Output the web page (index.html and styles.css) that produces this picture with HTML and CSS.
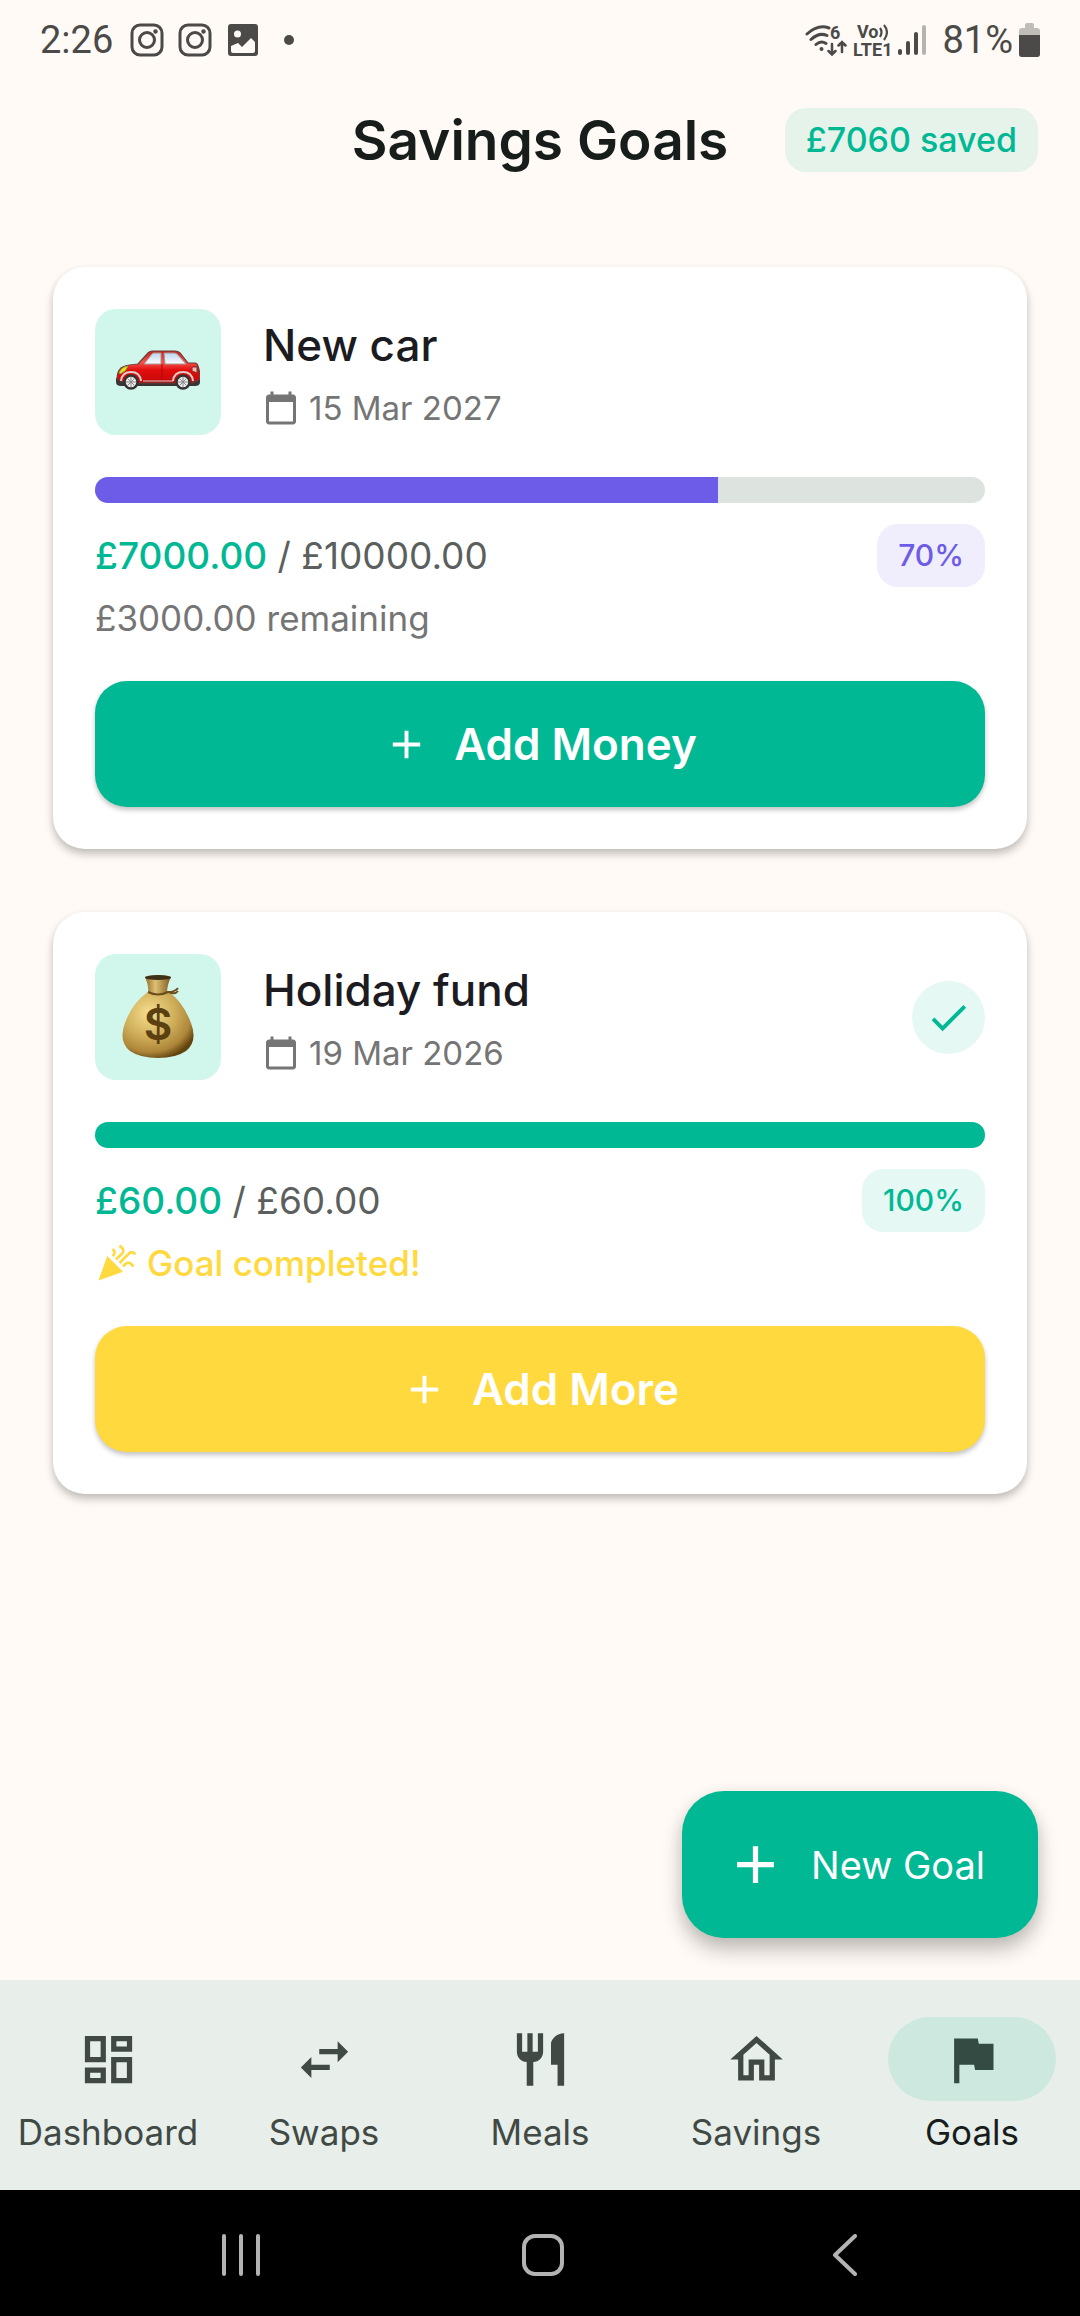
FILE: index.html
```html
<!DOCTYPE html>
<html lang="en">
<head>
<meta charset="utf-8">
<meta name="viewport" content="width=device-width, initial-scale=1">
<title>Savings Goals</title>
<link rel="stylesheet" href="styles.css">
</head>
<body>
<svg class="defs" aria-hidden="true">
  <symbol id="calendar" viewBox="0 0 24 24"><path d="M20 3h-1V1h-2v2H7V1H5v2H4c-1.100 0-2 .9-2 2v16c0 1.100.9 2 2 2h16c1.100 0 2-.9 2-2V5c0-1.100-.9-2-2-2zm0 18H4V8h16v13z"/></symbol>
  <symbol id="plus" viewBox="0 0 24 24"><path d="M19 13h-6v6h-2v-6H5v-2h6V5h2v6h6v2z"/></symbol>
  <symbol id="camera" viewBox="0 0 34 34"><g fill="none" stroke="currentColor" stroke-width="3"><rect x="2" y="2" width="30" height="30" rx="8"/><circle cx="17" cy="17" r="7.500"/></g><circle cx="25.500" cy="8.500" r="2.200" fill="currentColor"/></symbol>
</svg>

<div class="status">
  <div class="status-side">
    <span class="clock">2:26</span>
    <svg class="s-icon" viewBox="0 0 34 34"><use href="#camera"/></svg>
    <svg class="s-icon" viewBox="0 0 34 34"><use href="#camera"/></svg>
    <svg class="s-icon" viewBox="0 0 34 34"><path fill-rule="evenodd" d="M5 1h24a3 3 0 0 1 3 3v26a3 3 0 0 1-3 3H5a3 3 0 0 1-3-3V4a3 3 0 0 1 3-3zM5 23v5q0 2 2 2h20q2 0 2-2v-9l-4-4-9 9-4-4zM11.500 7.500a3.500 3.500 0 1 0 0 7 3.500 3.500 0 0 0 0-7z" fill="currentColor"/></svg>
    <span class="dot"></span>
  </div>
  <div class="status-side right">
    <svg class="wifi" viewBox="0 0 42 34"><g fill="none" stroke="currentColor" stroke-width="3" stroke-linecap="round"><path d="M2 11Q13 1 24 5M6 16.500Q14 9 22 12.500M11 21.500Q16 17 21 20.500"/><path d="M27 21v10M23.500 28l3.500 3.500 3.500-3.500M37 29V19M33.500 22.500L37 19l3.500 3.500" stroke-width="2.500"/></g><circle cx="16.500" cy="26" r="2"/><text x="25" y="16" class="tiny">6</text></svg>
    <div class="volte"><span class="vo">Vo<svg viewBox="0 0 10 18"><path d="M1 5q3 4 0 9M5 2q6 7 0 15" fill="none" stroke="currentColor" stroke-width="2.200"/></svg></span><span>LTE1</span></div>
    <svg class="signal" viewBox="0 0 28 30"><g stroke="currentColor" stroke-width="4" stroke-linecap="round"><path d="M2 26v2M10 18v10M18 9v19"/><path d="M26 2v26" opacity=".4"/></g></svg>
    <span class="battery-text">81%</span>
    <svg class="battery" viewBox="0 0 21 34"><path d="M6 2q0-2 2-2h5q2 0 2 2v3h3q3 0 3 3v23q0 3-3 3H3q-3 0-3-3V8q0-3 3-3h3z" opacity=".35"/><path d="M0 12h21v19q0 3-3 3H3q-3 0-3-3z"/></svg>
  </div>
</div>

<header class="app-bar">
  <h1>Savings Goals</h1>
  <span class="chip saved">£7060 saved</span>
</header>

<main class="goals">
  <article class="card">
    <div class="card-head">
      <div class="tile">
        <svg viewBox="0 0 84 84" role="img" aria-label="Car">
          <defs><linearGradient id="red" x2="0" y2="1"><stop offset="0" stop-color="#c8201c"/><stop offset=".35" stop-color="#f3544c"/><stop offset=".6" stop-color="#e20d0d"/><stop offset="1" stop-color="#c40808"/></linearGradient><linearGradient id="glass" x2="0" y2="1"><stop offset="0" stop-color="#b9d4ee"/><stop offset="1" stop-color="#fff"/></linearGradient></defs>
          <path d="M0 48h84v4q0 4-5 4H5q-5 0-5-4z" fill="#393535"/>
          <path d="M1 49q0-7 4-11 3-3 17-4l10-11q2-2 4-2h23q3 0 5 2l8 10h7q2 0 3 3 2 6 2 13l-8 4H9z" fill="url(#red)" stroke="#6b3c38" stroke-width="1.200"/>
          <path d="M28 34l8-10q1-1 2-1h7v11zM48 23h10q2 0 3 1l9 10H49z" fill="url(#glass)" stroke="#a59794"/>
          <path d="M3 43q2-6 9-7-1 5-8 8z" fill="#e9e41b" stroke="#93963a"/>
          <path d="M76 37h5v6l-5-2z" fill="#f4bbb1" stroke="#79302c"/>
          <path d="M46 34v17" stroke="#b30909" stroke-width="1"/><path d="M27 51h30" stroke="#ccc"/>
          <path d="M5 51q1-9 10-9t10 9M57 51q1-9 10-9t10 9" fill="none" stroke="#ddcec9" stroke-width="2"/>
          <g fill="#eee" stroke="#343232" stroke-width="2.500"><circle cx="15" cy="52" r="6.500"/><circle cx="67" cy="52" r="6.500"/></g>
          <path d="M10 52h10M15 47v10M11.500 48.500l7 7M18.500 48.500l-7 7M62 52h10M67 47v10M63.500 48.500l7 7M70.500 48.500l-7 7" stroke="#888" stroke-width="1"/>
        </svg>
      </div>
      <div class="info">
        <h2>New car</h2>
        <p class="date"><svg viewBox="0 0 24 24"><use href="#calendar"/></svg>15 Mar 2027</p>
      </div>
    </div>
    <div class="track" role="progressbar" aria-label="New car progress" aria-valuenow="70" aria-valuemin="0" aria-valuemax="100"><div class="fill purple" style="width:70%"></div></div>
    <div class="amounts"><p><strong>£7000.00</strong> / £10000.00</p><span class="chip percent">70%</span></div>
    <p class="note">£3000.00 remaining</p>
    <button type="button" class="action"><svg viewBox="0 0 24 24"><use href="#plus"/></svg>Add Money</button>
  </article>

  <article class="card">
    <div class="card-head">
      <div class="tile">
        <svg viewBox="0 0 84 84" role="img" aria-label="Money bag">
          <defs><radialGradient id="gold" cx=".38" cy=".32" r=".72"><stop offset="0" stop-color="#f7df90"/><stop offset=".5" stop-color="#cfae59"/><stop offset=".82" stop-color="#ae863a"/><stop offset="1" stop-color="#62440f"/></radialGradient><linearGradient id="neck"><stop offset="0" stop-color="#8f6c2d"/><stop offset=".4" stop-color="#dfbf72"/><stop offset="1" stop-color="#7d5a22"/></linearGradient></defs>
          <path d="M32 17Q16 28 9 48 2 66 14 76q10 7 28 7t28-7q12-10 5-28Q67 27 53 17z" fill="url(#gold)"/>
          <path d="M29 2q13-4 26 0-4 8-4 16-9 4-19 0 1-7-3-16z" fill="url(#neck)"/>
          <ellipse cx="42" cy="2.500" rx="13" ry="2.500" fill="#3e3017"/>
          <path d="M32 17q10 5 20 0 7 0 10-4M53 17q6 3 9-1" fill="none" stroke="#6c4d1c" stroke-width="2"/>
          <text x="42" y="65" text-anchor="middle" class="dollar">$</text>
        </svg>
      </div>
      <div class="info">
        <h2>Holiday fund</h2>
        <p class="date"><svg viewBox="0 0 24 24"><use href="#calendar"/></svg>19 Mar 2026</p>
      </div>
      <span class="done"><svg viewBox="0 0 24 24" role="img" aria-label="Completed"><path d="M9 16.170L4.830 12l-1.420 1.410L9 19 21 7l-1.410-1.410z"/></svg></span>
    </div>
    <div class="track" role="progressbar" aria-label="Holiday fund progress" aria-valuenow="100" aria-valuemin="0" aria-valuemax="100"><div class="fill" style="width:100%"></div></div>
    <div class="amounts"><p><strong>£60.00</strong> / £60.00</p><span class="chip percent full">100%</span></div>
    <p class="note complete"><svg viewBox="0 0 24 24"><path d="M2 22l14-5-9-9z"/><path d="M14.530 12.530l5.590-5.590c.49-.49 1.280-.49 1.770 0l.59.590 1.060-1.060-.59-.59c-1.070-1.070-2.820-1.070-3.890 0l-5.590 5.590zM10.060 6.880l-.59.590 1.060 1.060.59-.59c1.070-1.070 1.070-2.820 0-3.890l-.59-.59-1.060 1.070.59.590c.48.48.48 1.280 0 1.760zM17.060 11.880l-1.590 1.590 1.060 1.060 1.590-1.590c.49-.49 1.280-.49 1.770 0l1.610 1.610 1.060-1.060-1.610-1.610c-1.070-1.070-2.820-1.070-3.890 0zM15.060 5.880l-3.590 3.590 1.060 1.060 3.590-3.590c1.070-1.070 1.070-2.820 0-3.890l-1.590-1.590-1.060 1.060 1.590 1.590c.48.49.48 1.290 0 1.770z"/></svg>Goal completed!</p>
    <button type="button" class="action more"><svg viewBox="0 0 24 24"><use href="#plus"/></svg>Add More</button>
  </article>

  <button type="button" class="fab"><svg viewBox="0 0 24 24"><use href="#plus"/></svg>New Goal</button>
</main>

<nav class="tabs" aria-label="Main">
  <a href="#dashboard"><span class="pill"><svg viewBox="0 0 24 24"><path d="M19 5v2h-4V5h4M9 5v6H5V5h4m10 8v6h-4v-6h4M9 17v2H5v-2h4M21 3h-8v6h8V3zM11 3H3v10h8V3zm10 8h-8v10h8V11zm-10 4H3v6h8v-6z"/></svg></span>Dashboard</a>
  <a href="#swaps"><span class="pill"><svg viewBox="0 0 24 24"><path d="M6.990 11L3 15l3.990 4v-3H14v-2H6.990v-3zM21 9l-3.990-4v3H10v2h7.010v3L21 9z"/></svg></span>Swaps</a>
  <a href="#meals"><span class="pill"><svg viewBox="0 0 24 24"><path d="M11 9H9V2H7v7H5V2H3v7c0 2.120 1.660 3.840 3.750 3.970V22h2.500v-9.030C11.340 12.840 13 11.120 13 9V2h-2v7zm5-3v8h2.500v8H21V2c-2.760 0-5 2.240-5 4z"/></svg></span>Meals</a>
  <a href="#savings"><span class="pill"><svg viewBox="0 0 24 24"><path d="M12 5.690l5 4.500V18h-2v-6H9v6H7v-7.810l5-4.500M12 3L2 12h3v8h6v-6h2v6h6v-8h3L12 3z"/></svg></span>Savings</a>
  <a href="#goals" class="active" aria-current="page"><span class="pill"><svg viewBox="0 0 24 24"><path d="M14.400 6L14 4H5v17h2v-7h5.600l.4 2h7V6z"/></svg></span>Goals</a>
</nav>

<div class="system">
  <button type="button" aria-label="Recent apps"><svg viewBox="0 0 42 42"><path d="M4 2v38M21 2v38M38 2v38"/></svg></button>
  <button type="button" aria-label="Home"><svg viewBox="0 0 42 42"><rect x="2" y="2" width="38" height="38" rx="11"/></svg></button>
  <button type="button" aria-label="Back"><svg viewBox="0 0 42 42"><path d="M31 2L11 21l20 19"/></svg></button>
</div>
</body>
</html>
```

FILE: styles.css
```css
:root {
  --green: #00b894;
  --green-tint: #e5f8f4;
  --purple: #6c5ce7;
  --yellow: #ffd93d;
  --page: #fffaf5;
  --grey: #757575;
}

* { box-sizing: border-box; }

body {
  margin: 0;
  min-height: 100vh;
  display: flex;
  flex-direction: column;
  background: var(--page);
  font-family: Inter, "Open Sans", sans-serif;
  color: #171d1b;
}

h1, h2, p { margin: 0; }
svg { display: block; flex: none; fill: currentColor; }
button { border: 0; font: inherit; cursor: pointer; }
.defs { display: none; }

/* Status bar */
.status {
  display: flex;
  justify-content: space-between;
  height: 80px;
  padding: 0 40px;
  color: #4b4a48;
  font-family: Roboto, sans-serif;
  font-size: 38px;
}
.status-side { display: flex; align-items: center; gap: 14px; }
.clock { margin-right: 3px; }
.right { gap: 6px; }
.s-icon { width: 34px; height: 34px; }
.dot { width: 10px; height: 10px; margin-left: 10px; border-radius: 50%; background: currentColor; }
.wifi { width: 42px; height: 34px; }
.tiny { font-size: 18px; font-weight: 700; }
.volte { display: flex; flex-direction: column; align-items: center; font-size: 18px; line-height: 17px; font-weight: 700; }
.vo { display: flex; }
.vo svg { width: 10px; height: 18px; }
.signal { width: 28px; height: 30px; }
.battery-text { margin-left: 10px; }
.battery { width: 21px; height: 34px; }

/* Title bar */
.app-bar {
  display: grid;
  grid-template-columns: 1fr auto 1fr;
  align-items: center;
  height: 124px;
  padding: 0 42px 4px;
}
.app-bar h1 { grid-column: 2; font-size: 55px; line-height: 64px; font-weight: 600; }
.chip {
  padding: 0 21px;
  border-radius: 21px;
  font-weight: 500;
  white-space: nowrap;
}
.saved { justify-self: end; background: #e5f3eb; color: var(--green); font-size: 34px; line-height: 64px; }

/* Goal cards */
.goals {
  position: relative;
  flex: 1;
  display: flex;
  flex-direction: column;
  gap: 63px;
  padding: 63px 53px 240px;
}
.card {
  display: flex;
  flex-direction: column;
  padding: 42px;
  border-radius: 32px;
  background: #fff;
  box-shadow: 0 5px 8px rgba(0, 0, 0, .24), 0 1px 6px rgba(0, 0, 0, .03);
}
.card-head { display: flex; align-items: center; gap: 42px; margin-bottom: 42px; }
.tile {
  display: grid;
  place-items: center;
  width: 126px;
  height: 126px;
  border-radius: 21px;
  background: #d1f7ec;
}
.tile svg { width: 84px; height: 84px; }
.dollar { font: 600 44px Inter, sans-serif; fill: #5b4011; }
.info { flex: 1; display: flex; flex-direction: column; gap: 12px; }
.info h2 { font-size: 44px; line-height: 60px; font-weight: 500; color: #1c1b1f; }
.date { display: flex; align-items: center; gap: 10px; font-size: 33px; line-height: 42px; color: var(--grey); }
.date svg { width: 36px; height: 36px; }
.done {
  display: grid;
  place-items: center;
  width: 73px;
  height: 73px;
  border-radius: 50%;
  background: var(--green-tint);
  color: var(--green);
}
.done svg { width: 47px; height: 47px; }

.track { height: 26px; margin-bottom: 21px; overflow: hidden; border-radius: 13px; background: #dde4e0; }
.fill { height: 100%; background: var(--green); }
.purple { background: var(--purple); }

.amounts { display: flex; justify-content: space-between; align-items: center; margin-bottom: 10px; font-size: 37px; line-height: 63px; color: #5b5f5d; }
.amounts strong { font-weight: 500; color: var(--green); }
.percent { font-size: 30px; background: #f0eefd; color: var(--purple); }
.full { background: var(--green-tint); color: var(--green); }
.note { display: flex; align-items: center; gap: 10px; margin-bottom: 42px; font-size: 35px; line-height: 42px; color: var(--grey); }
.complete { color: var(--yellow); font-weight: 500; }
.complete svg { width: 42px; height: 42px; }

.action {
  display: flex;
  justify-content: center;
  align-items: center;
  gap: 24px;
  height: 126px;
  border-radius: 32px;
  background: var(--green);
  color: #fff;
  font-size: 44px;
  font-weight: 600;
  box-shadow: 0 3px 5px rgba(0, 0, 0, .24);
}
.more { background: var(--yellow); }
.action svg { width: 47px; height: 47px; }

.fab {
  position: absolute;
  right: 42px;
  bottom: 42px;
  display: flex;
  align-items: center;
  gap: 24px;
  height: 147px;
  padding: 0 53px 0 42px;
  border-radius: 42px;
  background: var(--green);
  color: #fff;
  font-size: 38px;
  box-shadow: 0 12px 20px rgba(0, 0, 0, .24), 0 2px 16px rgba(0, 0, 0, .06);
}
.fab svg { width: 63px; height: 63px; }

/* Bottom navigation */
.tabs { display: grid; grid-template-columns: repeat(5, 1fr); height: 210px; background: #e8eeea; }
.tabs a {
  display: flex;
  flex-direction: column;
  align-items: center;
  gap: 10px;
  padding-top: 37px;
  color: #404944;
  font-size: 35px;
  line-height: 42px;
  text-decoration: none;
}
.pill { display: grid; place-items: center; width: 168px; height: 84px; border-radius: 42px; }
.pill svg { width: 63px; height: 63px; }
.tabs .active { color: #171d1b; }
.active .pill { background: #cde8df; color: #334b43; }

/* System navigation */
.system { display: flex; justify-content: space-around; align-items: center; height: 126px; padding: 4px 84px 0 90px; background: #000; }
.system button { padding: 21px; background: none; color: #b3b3b3; }
.system svg { width: 42px; height: 42px; fill: none; stroke: currentColor; stroke-width: 4; stroke-linecap: round; stroke-linejoin: round; }
```
